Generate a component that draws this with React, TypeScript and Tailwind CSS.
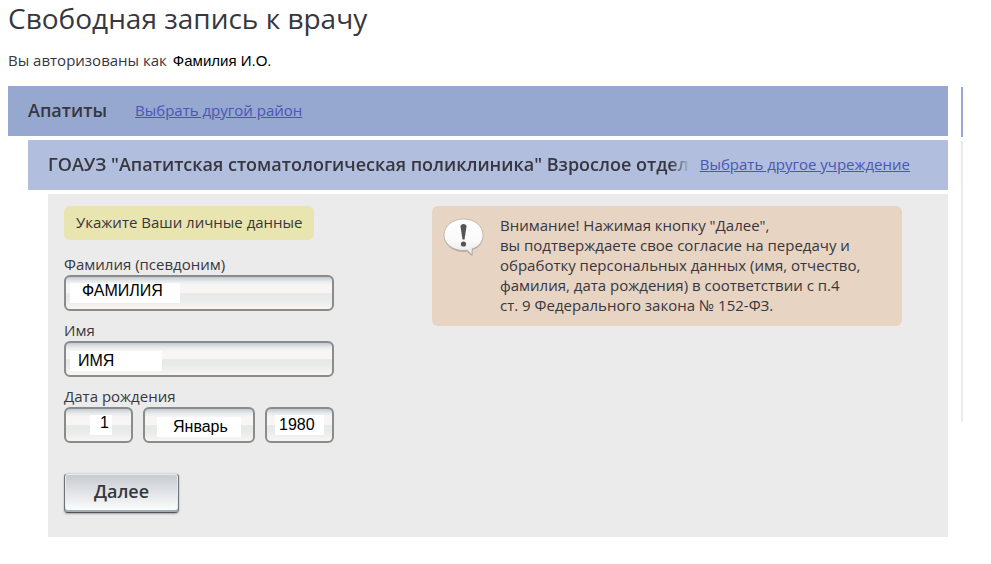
import { useState } from "react"

interface FieldProps {
  id: string
  label: string
  value: string
  onChange: (value: string) => void
  className?: string
  inputClassName: string
  hideLabel?: boolean
}

function Field({ id, label, value, onChange, className = "", inputClassName, hideLabel }: FieldProps) {
  return (
    <div className={className}>
      {!hideLabel && (
        <label htmlFor={id} className="block h-[21px] leading-5">
          {label}
        </label>
      )}
      <div className="h-9 rounded-md border-2 border-[#8a8b8b] bg-[linear-gradient(to_bottom,#c3cbd3_0,#e6e8ea_4px,#f8f6f4_8px,#f8f6f4_50%,#e7e8e9_52%,#e9eaea_70%,#f8f6f4_100%)]">
        <input
          id={id}
          aria-label={hideLabel ? label : undefined}
          value={value}
          onChange={(e) => onChange(e.target.value)}
          className={`block h-5 bg-white font-['Liberation_Sans',sans-serif] text-base text-black outline-none ${inputClassName}`}
        />
      </div>
    </div>
  )
}

function WarningIcon() {
  return (
    <svg width="42" height="40" viewBox="0 0 42 40" className="mt-0.5 shrink-0" aria-hidden="true">
      <defs>
        <linearGradient id="bubble" x1="0" y1="0" x2="0" y2="1">
          <stop offset="0" stopColor="#ffffff" />
          <stop offset="0.6" stopColor="#fafafa" />
          <stop offset="1" stopColor="#e8e8e8" />
        </linearGradient>
      </defs>
      <path
        d="M20.500 3C10 3 1 10 1 19S10 35 20.500 35c1.200 0 2.400-.1 3.500-.3L29.500 39.500V33C36 31 40 26 40 19 40 10 31.500 3 20.500 3Z"
        fill="#8f8780"
        opacity="0.5"
      />
      <path
        d="M20.500 2C10 2 1 9 1 18S10 33.500 20.500 33.500c1.300 0 2.600-.1 3.800-.3L29 37.800V32C36 29.500 40 25 40 18 40 9 31.500 2 20.500 2Z"
        fill="url(#bubble)"
        stroke="#a89f97"
        strokeWidth="0.6"
      />
      <path d="M17.500 9.500C17.500 6 23.500 6 23.500 9.500L21.500 22.500h-2Z" fill="#555" />
      <circle cx="20.500" cy="27" r="2.600" fill="#555" />
    </svg>
  )
}

export default function App() {
  const [lastName, setLastName] = useState("ФАМИЛИЯ")
  const [firstName, setFirstName] = useState("ИМЯ")
  const [day, setDay] = useState("1")
  const [month, setMonth] = useState("Январь")
  const [year, setYear] = useState("1980")

  return (
    <div className="bg-white pr-7 pl-2 font-['Open_Sans','Noto_Sans',sans-serif] text-[15px] leading-5 text-[#37373f]">
      <h1 className="text-[28px] leading-9">Свободная запись к врачу</h1>
      <p className="mt-3.5 flex gap-1.5">
        <span>Вы авторизованы как</span>
        <span className="pt-px font-['Liberation_Sans',sans-serif] text-black">Фамилия И.О.</span>
      </p>

      <div className="mt-[15px] flex gap-[13px]">
        <main className="flex min-w-0 flex-1 flex-col gap-1">
          <div className="flex h-[50px] items-center gap-7 bg-[#96a7d0] px-5 pb-0.5">
            <h2 className="text-lg leading-7 font-semibold">Апатиты</h2>
            <a href="#" className="text-[#4b55b8] underline">
              Выбрать другой район
            </a>
          </div>

          <div className="ml-5 flex h-[50px] items-center gap-2.5 bg-[#b1bedd] pr-[38px] pb-0.5 pl-5">
            <h2 className="min-w-0 flex-1 overflow-hidden mask-r-from-[calc(100%-20px)] text-lg leading-7 font-semibold whitespace-nowrap">
              ГОАУЗ "Апатитская стоматологическая поликлиника" Взрослое отдел
            </h2>
            <a href="#" className="shrink-0 text-[#4b55b8] underline">
              Выбрать другое учреждение
            </a>
          </div>

          <div className="ml-10 flex items-start justify-between bg-[#ebebeb] pt-3 pr-[46px] pb-6 pl-4">
            <form className="w-[270px]" onSubmit={(e) => e.preventDefault()}>
              <p className="w-[250px] rounded-md bg-[#e8e5b0] px-3 pt-1.5 pb-2 whitespace-nowrap">
                Укажите Ваши личные данные
              </p>

              <Field
                id="last-name"
                label="Фамилия (псевдоним)"
                value={lastName}
                onChange={setLastName}
                className="mt-3.5"
                inputClassName="mt-1.5 ml-1 w-[110px] pb-1 pl-3"
              />
              <Field
                id="first-name"
                label="Имя"
                value={firstName}
                onChange={setFirstName}
                className="mt-[9px]"
                inputClassName="mt-2 ml-1 w-[92px] pl-2"
              />

              <fieldset className="mt-[9px]">
                <legend className="h-[21px]">Дата рождения</legend>
                <div className="flex gap-2.5">
                  <Field
                    id="day"
                    label="День"
                    hideLabel
                    value={day}
                    onChange={setDay}
                    className="w-[69px]"
                    inputClassName="mt-1.5 ml-6 w-[22px] pb-1 pl-2.5"
                  />
                  <Field
                    id="month"
                    label="Месяц"
                    hideLabel
                    value={month}
                    onChange={setMonth}
                    className="flex-1"
                    inputClassName="mt-2 ml-3 w-[84px] pl-4"
                  />
                  <Field
                    id="year"
                    label="Год"
                    hideLabel
                    value={year}
                    onChange={setYear}
                    className="w-[69px]"
                    inputClassName="mt-1.5 ml-2 w-[49px] pl-1"
                  />
                </div>
              </fieldset>

              <button
                type="submit"
                className="mt-[30px] block h-10 w-[115px] rounded border border-t-[#d5d7d9] border-r-[#6f7378] border-b-[#4f5359] border-l-[#6f7378] bg-linear-to-b from-[#c6cad0] to-white pb-1 text-lg leading-7 font-semibold shadow-[inset_0_-2px_0_#a4abb8,inset_0_0_0_1px_#e9ebed,0_1px_2px_rgba(0,0,0,0.3)]"
              >
                Далее
              </button>
            </form>

            <div className="flex w-[470px] items-start gap-[15px] rounded-md bg-[#e7d4c3] pt-[9px] pr-4 pb-[11px] pl-[11px]">
              <WarningIcon />
              <p className="whitespace-nowrap">
                Внимание! Нажимая кнопку "Далее",
                <br />
                вы подтверждаете свое согласие на передачу и
                <br />
                обработку персональных данных (имя, отчество,
                <br />
                фамилия, дата рождения) в соответствии с п.4
                <br />
                ст. 9 Федерального закона № 152-ФЗ.
              </p>
            </div>
          </div>
        </main>

        <aside className="mt-px flex w-0.5 flex-col gap-1">
          <div className="h-[50px] bg-[#96a7d0]" />
          <div className="h-[281px] bg-[#ebebeb]" />
        </aside>
      </div>
    </div>
  )
}
